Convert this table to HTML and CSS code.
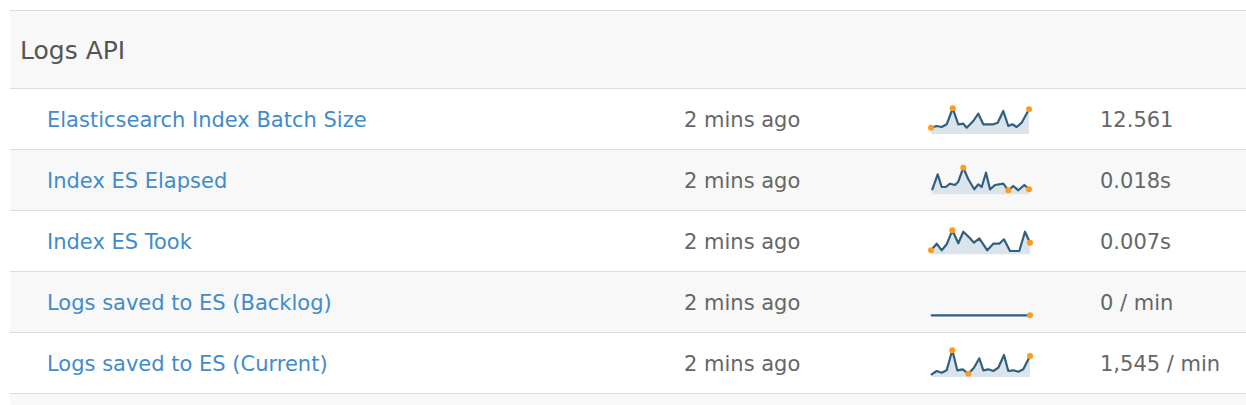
FILE: index.html
```html
<!DOCTYPE html>
<html>
<head>
<meta charset="utf-8">
<link rel="stylesheet" href="styles.css">
</head>
<body>
<div class="panel">
  <div class="panel-head">Logs API</div>
  <div class="row">
    <a class="name" href="#">Elasticsearch Index Batch Size</a>
    <span class="time">2 mins ago</span>
    <span class="spark">
      <svg width="102" height="30" viewBox="0 0 102 30">
        <polygon class="area" points="1,22.7 6.7,21 11.7,22 16.7,19.3 22.7,3.3 28.3,19.3 33.3,18.7 36.7,22.7 43.3,16 48.3,8.7 53.3,19.3 58.3,19.3 63.3,19.3 67.7,17.7 73.3,6 78.3,21 82.3,19.3 86.7,22 91.7,17.7 99,4.3 99,29 1,29"/>
        <polyline class="line" points="1,22.7 6.7,21 11.7,22 16.7,19.3 22.7,3.3 28.3,19.3 33.3,18.7 36.7,22.7 43.3,16 48.3,8.7 53.3,19.3 58.3,19.3 63.3,19.3 67.7,17.7 73.3,6 78.3,21 82.3,19.3 86.7,22 91.7,17.7 99,4.3"/>
        <circle class="dot" cx="1" cy="22.7" r="3"/>
        <circle class="dot" cx="22.7" cy="3.3" r="3"/>
        <circle class="dot" cx="99" cy="4.3" r="3"/>
      </svg>
    </span>
    <span class="value">12.561</span>
  </div>
  <div class="row alt">
    <a class="name" href="#">Index ES Elapsed</a>
    <span class="time">2 mins ago</span>
    <span class="spark">
      <svg width="102" height="30" viewBox="0 0 102 30">
        <polygon class="area" points="2.3,23.3 7.7,8.3 11.7,21 15.7,21 20,17.7 25,19 28.3,15.7 33.3,1.7 38.3,13.3 44.3,23.3 48.3,18.3 51.7,21 56,6.7 60,23.3 65,19 73.3,17.7 78.3,24.3 83.3,20 88.3,24.3 94.3,19 99,23.3 99,28.3 2.3,28.3"/>
        <polyline class="line" points="2.3,23.3 7.7,8.3 11.7,21 15.7,21 20,17.7 25,19 28.3,15.7 33.3,1.7 38.3,13.3 44.3,23.3 48.3,18.3 51.7,21 56,6.7 60,23.3 65,19 73.3,17.7 78.3,24.3 83.3,20 88.3,24.3 94.3,19 99,23.3"/>
        <circle class="dot" cx="33.3" cy="1.7" r="3"/>
        <circle class="dot" cx="78.3" cy="24.3" r="3"/>
        <circle class="dot" cx="99" cy="23.3" r="3"/>
      </svg>
    </span>
    <span class="value">0.018s</span>
  </div>
  <div class="row">
    <a class="name" href="#">Index ES Took</a>
    <span class="time">2 mins ago</span>
    <span class="spark">
      <svg width="102" height="30" viewBox="0 0 102 30">
        <polygon class="area" points="1,23.3 6.7,16.7 11.7,23.3 16.7,17.3 22.3,3.3 28.3,16.3 33.3,4.7 40,11.3 44,15.7 49.3,11.3 57.3,23.3 63.3,16.7 69.3,16.7 74,12.3 80,24 89.3,24 95,4.7 100,15.7 100,27.3 1,27.3"/>
        <polyline class="line" points="1,23.3 6.7,16.7 11.7,23.3 16.7,17.3 22.3,3.3 28.3,16.3 33.3,4.7 40,11.3 44,15.7 49.3,11.3 57.3,23.3 63.3,16.7 69.3,16.7 74,12.3 80,24 89.3,24 95,4.7 100,15.7"/>
        <circle class="dot" cx="1" cy="23.3" r="3"/>
        <circle class="dot" cx="22.3" cy="3.3" r="3"/>
        <circle class="dot" cx="100" cy="15.7" r="3"/>
      </svg>
    </span>
    <span class="value">0.007s</span>
  </div>
  <div class="row alt">
    <a class="name" href="#">Logs saved to ES (Backlog)</a>
    <span class="time">2 mins ago</span>
    <span class="spark">
      <svg width="102" height="30" viewBox="0 0 102 30">
        <polyline class="line" points="1.7,27.3 100,27.3"/>
        <circle class="dot" cx="100" cy="27.3" r="3"/>
      </svg>
    </span>
    <span class="value">0 / min</span>
  </div>
  <div class="row">
    <a class="name" href="#">Logs saved to ES (Current)</a>
    <span class="time">2 mins ago</span>
    <span class="spark">
      <svg width="102" height="30" viewBox="0 0 102 30">
        <polygon class="area" points="1.7,25.3 6.7,22 11.7,23.7 16.7,21.3 22.3,1.3 27.3,21.3 32.7,20.3 38.3,24.7 44,18.7 49.3,9.3 53.3,21.3 58.3,20.3 63.3,22 68.3,18.7 74,6 78.3,22 83.3,21.3 88.3,22.7 93.3,20.3 100,7 100,28 1.7,28"/>
        <polyline class="line" points="1.7,25.3 6.7,22 11.7,23.7 16.7,21.3 22.3,1.3 27.3,21.3 32.7,20.3 38.3,24.7 44,18.7 49.3,9.3 53.3,21.3 58.3,20.3 63.3,22 68.3,18.7 74,6 78.3,22 83.3,21.3 88.3,22.7 93.3,20.3 100,7"/>
        <circle class="dot" cx="22.3" cy="1.3" r="3"/>
        <circle class="dot" cx="38.3" cy="24.7" r="3"/>
        <circle class="dot" cx="100" cy="7" r="3"/>
      </svg>
    </span>
    <span class="value">1,545 / min</span>
  </div>
  <div class="tail"></div>
</div>
</body>
</html>
```

FILE: styles.css
```css
html, body {
  margin: 0;
  padding: 0;
  background: #ffffff;
}

body {
  font-family: "DejaVu Sans", Verdana, sans-serif;
  overflow: hidden;
}

.panel {
  margin: 10px 0 0 10px;
  border-top: 1px solid #dddddd;
}

.panel-head {
  height: 78px;
  display: flex;
  align-items: center;
  padding-left: 10px;
  padding-top: 2px;
  box-sizing: border-box;
  background: #f8f8f8;
  color: #555555;
  font-size: 25px;
  border-bottom: 1px solid #dddddd;
}

.row {
  height: 60px;
  display: grid;
  grid-template-columns: 674px 246px 170px 1fr;
  align-items: center;
  border-bottom: 1px solid #dddddd;
  font-size: 21px;
  background: #ffffff;
}

.row > * {
  margin-top: 2px;
}

.row.alt {
  background: #f8f8f8;
}

.tail {
  height: 12px;
  background: #f8f8f8;
}

.name {
  padding-left: 37px;
  color: #428bca;
  text-decoration: none;
  white-space: nowrap;
}

.time,
.value {
  color: #666666;
  white-space: nowrap;
}

.spark {
  display: flex;
  align-items: center;
}

.spark svg {
  overflow: visible;
  display: block;
}

.area {
  fill: #dbe4ea;
  stroke: none;
}

.line {
  fill: none;
  stroke: #305f7f;
  stroke-width: 2.2;
  stroke-linejoin: round;
  stroke-linecap: round;
}

.dot {
  fill: #ff9a1f;
}
```
